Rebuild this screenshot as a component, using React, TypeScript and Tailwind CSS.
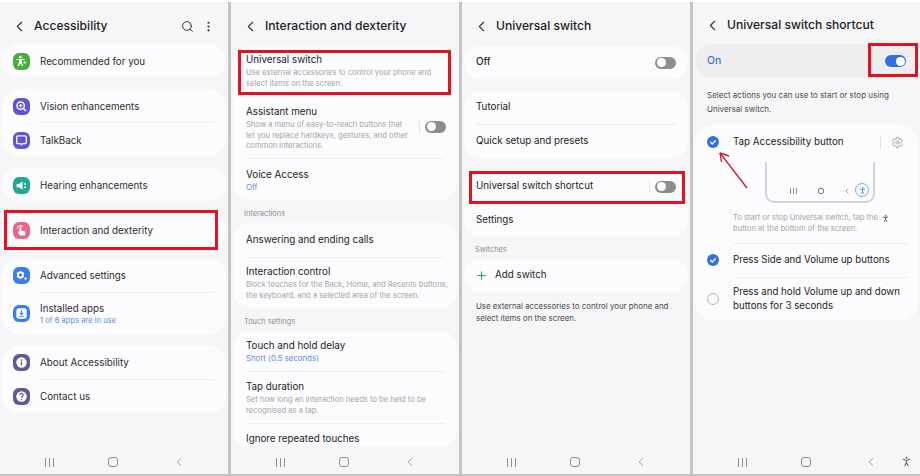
import type { ReactNode } from 'react'
import { ChevronLeft, MoreVertical, PersonStanding, Plus, Search, Settings } from 'lucide-react'

const font = 'font-["Inter","Liberation_Sans",sans-serif]'

function Card({ children, className = '' }: { children: ReactNode; className?: string }) {
  return <div className={`mx-[2px] rounded-[17px] bg-[#fcfcfe] ${className}`}>{children}</div>
}

function Divider({ left = 'ml-[37px]', right = 'mr-[12px]' }: { left?: string; right?: string }) {
  return <div className={`h-px bg-[#eeeef0] ${left} ${right}`} />
}

function Toggle({ on = false }: { on?: boolean }) {
  return (
    <div className={`flex h-[12px] w-[21px] items-center rounded-full px-[1.5px] ${on ? 'justify-end bg-[#2f6fe0]' : 'justify-start bg-[#8d8d8f]'}`}>
      <div className="h-[9px] w-[9px] rounded-full bg-white" />
    </div>
  )
}

function Header({ title, pad = 'pt-[7px]', children }: { title: string; pad?: string; children?: ReactNode }) {
  return (
    <div className={`flex h-[42px] shrink-0 items-center pl-[11px] pr-[13px] ${pad}`}>
      <ChevronLeft className="h-[17px] w-[17px] text-[#333]" strokeWidth={1.5} />
      <span className="ml-[6px] text-[12.1px] font-medium text-[#1c1c1e]">{title}</span>
      {children}
    </div>
  )
}

function NavBar() {
  return (
    <div className="relative flex h-[28px] shrink-0 items-center justify-between pl-[45px] pr-[42px] pt-[4px]">
      <div className="flex gap-[3px]">
        <div className="h-[9px] w-px bg-[#8f8f92]" />
        <div className="h-[9px] w-px bg-[#8f8f92]" />
        <div className="h-[9px] w-px bg-[#8f8f92]" />
      </div>
      <div className="h-[10px] w-[10px] rounded-[3px] border border-[#8f8f92]" />
      <ChevronLeft className="h-[14px] w-[14px] text-[#8f8f92]" strokeWidth={1.4} />
    </div>
  )
}

function MenuIcon({ color, children }: { color: string; children: ReactNode }) {
  return (
    <div className={`flex h-[17px] w-[17px] shrink-0 items-center justify-center rounded-[6px] text-white ${color}`}>
      <svg viewBox="0 0 12 12" className="h-[13px] w-[13px]" fill="currentColor">{children}</svg>
    </div>
  )
}

function MenuRow({ icon, title, sub, h = 'h-[33px]', nudge = '' }: { icon: ReactNode; title: string; sub?: string; h?: string; nudge?: string }) {
  return (
    <div className={`flex items-center pl-[11px] ${h} ${nudge}`}>
      {icon}
      <div className="ml-[10px]">
        <div className="text-[9.8px] leading-[13px] text-[#2c2c2e]">{title}</div>
        {sub && <div className="text-[7.6px] leading-[11px] text-[#5f8fdc]">{sub}</div>}
      </div>
    </div>
  )
}

function AccessibilityPanel() {
  return (
    <div className="flex h-full w-[228px] shrink-0 flex-col">
      <Header title="Accessibility">
        <Search className="ml-auto h-[13px] w-[13px] text-[#333]" strokeWidth={1.8} />
        <MoreVertical className="ml-[8px] h-[13px] w-[13px] text-[#333]" strokeWidth={2} />
      </Header>
      <div className="flex-1 overflow-hidden">
        <Card>
          <MenuRow
            nudge="pt-[2px]"
            icon={
              <MenuIcon color="bg-[#46ad3c]">
                <circle cx="5" cy="2" r="1.2" />
                <path d="M1 3.6h8v1.1H6.3v2l1.4 3.6H6.5L5 7.6l-1.5 2.7H2.300l1.400-3.600v-2H1z" />
                <path d="M9 6.200c.4-.5 1.300-.3 1.300.4 0 .6-.8 1.100-1.300 1.500-.5-.4-1.300-.9-1.300-1.500 0-.7.900-.9 1.300-.4z" />
              </MenuIcon>
            }
            title="Recommended for you"
          />
        </Card>
        <Card className="mt-[12px]">
          <MenuRow
            nudge="pt-[2px]"
            icon={
              <MenuIcon color="bg-[#5e54d8]">
                <circle cx="5.200" cy="5.200" r="3.400" fill="none" stroke="currentColor" strokeWidth="1.300" />
                <path d="M3.700 5.200h3M5.200 3.700v3M7.900 7.900l2.300 2.300" fill="none" stroke="currentColor" strokeWidth="1.200" />
              </MenuIcon>
            }
            title="Vision enhancements"
          />
          <Divider />
          <MenuRow
            nudge="pt-[2px]"
            icon={
              <MenuIcon color="bg-[#5e54d8]">
                <path d="M2.600 1.800h6.800a1 1 0 0 1 1 1v5a1 1 0 0 1-1 1H7l-1 1.200-1-1.200H2.600a1 1 0 0 1-1-1v-5a1 1 0 0 1 1-1z" fill="none" stroke="currentColor" strokeWidth="1.200" />
              </MenuIcon>
            }
            title="TalkBack"
          />
        </Card>
        <Card className="mt-[12px]">
          <MenuRow
            nudge="pt-[2px]"
            icon={
              <MenuIcon color="bg-[#1fa896]">
                <path d="M1.500 4.500h2L7 2.300v7.400L3.500 7.500h-2z" />
                <circle cx="9.300" cy="4.500" r=".9" />
                <circle cx="9.300" cy="7.500" r=".9" />
              </MenuIcon>
            }
            title="Hearing enhancements"
          />
        </Card>
        <Card className="mt-[12px]">
          <MenuRow
            icon={
              <MenuIcon color="bg-[#e8668c]">
                <path d="M2.300 4.200a2.600 2.600 0 0 1 4.700-1.500" fill="none" stroke="currentColor" strokeWidth="1" />
                <path d="M4.200 3.700a.8.8 0 0 1 1.600 0v2.200l3 .7c.6.2.9.600.8 1.200l-.4 2.700H4.800L2.700 7.800c-.3-.4.200-1 .7-.7l.8.500z" />
              </MenuIcon>
            }
            title="Interaction and dexterity"
            h="h-[34px]"
          />
        </Card>
        <Card className="mt-[12px]">
          <MenuRow
            icon={
              <MenuIcon color="bg-[#3b7cf0]">
                <circle cx="5" cy="5.500" r="2.300" fill="none" stroke="currentColor" strokeWidth="1.600" />
                <path d="M5 1.800v1.400M5 7.800v1.400M1.800 3.700l1.200.7M7 6.600l1.200.7M1.800 7.300L3 6.600M7 4.400l1.200-.7" stroke="currentColor" strokeWidth="1.500" />
                <path d="M9.800 7.400v3M8.300 8.900h3" stroke="currentColor" strokeWidth=".8" />
              </MenuIcon>
            }
            title="Advanced settings"
          />
          <Divider />
          <MenuRow
            icon={
              <MenuIcon color="bg-[#3b7cf0]">
                <rect x="1.200" y="1.200" width="9.600" height="9.600" rx="2.400" />
                <path d="M6 3v3.800M4.300 5.400L6 7l1.700-1.600M3.800 8.500h4.400" fill="none" stroke="#3b7cf0" strokeWidth="1" />
              </MenuIcon>
            }
            title="Installed apps"
            sub="1 of 6 apps are in use"
            h="h-[41px]"
          />
        </Card>
        <Card className="mt-[12px]">
          <MenuRow
            icon={
              <MenuIcon color="bg-[#5f5a96]">
                <circle cx="6" cy="6" r="4.800" />
                <circle cx="6" cy="3.700" r=".8" fill="#5f5a96" />
                <rect x="5.350" y="5.100" width="1.300" height="3.700" rx=".4" fill="#5f5a96" />
              </MenuIcon>
            }
            title="About Accessibility"
          />
          <Divider />
          <MenuRow
            icon={
              <MenuIcon color="bg-[#5f5a96]">
                <circle cx="6" cy="6" r="4.800" />
                <path d="M4.500 4.600a1.500 1.500 0 1 1 2.300 1.300c-.5.300-.8.600-.8 1.200" fill="none" stroke="#5f5a96" strokeWidth="1.100" />
                <circle cx="6" cy="8.700" r=".7" fill="#5f5a96" />
              </MenuIcon>
            }
            title="Contact us"
          />
        </Card>
      </div>
      <NavBar />
    </div>
  )
}

function TextRow({ title, desc, sub, pad = 'py-[7px]', children }: { title: string; desc?: string[]; sub?: string; pad?: string; children?: ReactNode }) {
  return (
    <div className={`flex items-center pl-[13px] pr-[13px] ${pad}`}>
      <div className="min-w-0 flex-1">
        <div className="whitespace-nowrap text-[9.8px] leading-[14px] text-[#222224]">{title}</div>
        {sub && <div className="text-[7.8px] leading-[11px] text-[#5f8fdc]">{sub}</div>}
        {desc && (
          <div className="mt-[1px]">
            {desc.map(line => (
              <div key={line} className="whitespace-nowrap text-[7.6px] leading-[10.6px] text-[#a3a3a6]">{line}</div>
            ))}
          </div>
        )}
      </div>
      {children}
    </div>
  )
}

function SectionLabel({ children }: { children: ReactNode }) {
  return <div className="pl-[13px] text-[7.4px] leading-[10px] text-[#8c8c8f]">{children}</div>
}

function DexterityPanel() {
  return (
    <div className="flex h-full w-[228px] shrink-0 flex-col">
      <Header title="Interaction and dexterity" />
      <div className="flex-1 overflow-hidden">
        <Card className="mt-[3px]">
          <TextRow title="Universal switch" desc={['Use external accessories to control your phone and', 'select items on the screen.']} pad="pt-[6px] pb-[16px]" />
          <TextRow title="Assistant menu" desc={['Show a menu of easy-to-reach buttons that', 'let you replace hardkeys, gestures, and other', 'common interactions.']} pad="pb-[6px]">
            <div className="-mr-[2px] mb-[4px] flex items-center gap-[5px]">
              <div className="h-[13px] w-px bg-[#e4e4e6]" />
              <Toggle />
            </div>
          </TextRow>
          <Divider left="ml-[13px]" />
          <TextRow title="Voice Access" sub="Off" pad="pt-[9px] pb-[7px]" />
        </Card>
        <div className="mt-[9px]"><SectionLabel>Interactions</SectionLabel></div>
        <Card className="mt-[4px]">
          <TextRow title="Answering and ending calls" pad="py-[10px]" />
          <Divider left="ml-[13px]" />
          <TextRow title="Interaction control" desc={['Block touches for the Back, Home, and Recents buttons,', 'the keyboard, and a selected area of the screen.']} pad="pt-[7px] pb-[7px]" />
        </Card>
        <div className="mt-[9px]"><SectionLabel>Touch settings</SectionLabel></div>
        <Card className="mt-[4px] overflow-hidden">
          <TextRow title="Touch and hold delay" sub="Short (0.5 seconds)" pad="pt-[8px] pb-[7px]" />
          <Divider left="ml-[13px]" />
          <TextRow title="Tap duration" desc={['Set how long an interaction needs to be held to be', 'recognised as a tap.']} pad="pt-[8px] pb-[7px]" />
          <Divider left="ml-[13px]" />
          <TextRow title="Ignore repeated touches" pad="pt-[8px] pb-[2px]" />
        </Card>
      </div>
      <NavBar />
    </div>
  )
}

function SimpleRow({ title, strong, children }: { title: string; strong?: boolean; children?: ReactNode }) {
  return (
    <div className="flex h-[33px] items-center pl-[12px] pr-[12px]">
      <span className={`text-[9.8px] text-[#222224] ${strong ? 'font-medium' : ''}`}>{title}</span>
      <div className="ml-auto flex items-center gap-[5px]">{children}</div>
    </div>
  )
}

function SwitchPanel() {
  return (
    <div className="flex h-full w-[228px] shrink-0 flex-col">
      <Header title="Universal switch" />
      <div className="flex-1 overflow-hidden">
        <Card className="mt-[2px]">
          <SimpleRow title="Off" strong><Toggle /></SimpleRow>
        </Card>
        <Card className="mt-[12px]">
          <SimpleRow title="Tutorial" />
          <Divider left="ml-[12px]" />
          <SimpleRow title="Quick setup and presets" />
        </Card>
        <Card className="mt-[12px]">
          <SimpleRow title="Universal switch shortcut">
            <div className="h-[13px] w-px bg-[#e4e4e6]" />
            <Toggle />
          </SimpleRow>
          <div className="h-px" />
          <SimpleRow title="Settings" />
        </Card>
        <div className="mt-[8px]"><SectionLabel>Switches</SectionLabel></div>
        <Card className="mt-[4px]">
          <div className="flex h-[33px] items-center pl-[11px]">
            <Plus className="h-[13px] w-[13px] text-[#1fa67e]" strokeWidth={2} />
            <span className="ml-[7px] text-[9.8px] text-[#222224]">Add switch</span>
          </div>
        </Card>
        <div className="mt-[8px] pl-[14px] text-[7.9px] leading-[12.4px] text-[#4a4a4c]">
          <div>Use external accessories to control your phone and</div>
          <div>select items on the screen.</div>
        </div>
      </div>
      <NavBar />
    </div>
  )
}

function Check() {
  return (
    <div className="flex h-[12px] w-[12px] shrink-0 items-center justify-center rounded-full bg-[#2f72e8]">
      <svg viewBox="0 0 12 12" className="h-[12px] w-[12px]" fill="none" stroke="white" strokeWidth="1.4">
        <path d="M3.4 6.1l1.9 1.9 3.4-3.5" />
      </svg>
    </div>
  )
}

function ShortcutPanel() {
  return (
    <div className="relative flex h-full flex-1 flex-col">
      <Header title="Universal switch shortcut" pad="pt-[5px]" />
      <div className="flex-1 overflow-hidden">
        <div className="mx-[2px] flex h-[34px] items-center justify-between rounded-[17px] bg-[#eeeef0] pl-[12px] pr-[12px]">
          <span className="text-[10.4px] font-medium text-[#3a73d8]">On</span>
          <Toggle on />
        </div>
        <div className="mt-[10px] pl-[14px] text-[8px] leading-[14px] text-[#4a4a4c]">
          <div>Select actions you can use to start or stop using</div>
          <div>Universal switch.</div>
        </div>
        <Card className="mt-[9px] pb-[7px]">
          <div className="flex h-[34px] items-center pl-[12px] pr-[14px]">
            <Check />
            <span className="ml-[14px] text-[9.8px] text-[#222224]">Tap Accessibility button</span>
            <div className="ml-auto h-[13px] w-px bg-[#e4e4e6]" />
            <Settings className="ml-[10px] h-[13px] w-[13px] text-[#8a8a8d]" strokeWidth={1.4} />
          </div>
          <div className="ml-[70px] mt-[3px] flex h-[41px] w-[110px] items-end justify-between rounded-b-[9px] border-x-2 border-b-2 border-[#cfd3da] pb-[4px] pl-[23px] pr-[4px]">
            <div className="mb-[3px] flex gap-[2px]">
              <div className="h-[6px] w-px bg-[#8f8f92]" />
              <div className="h-[6px] w-px bg-[#8f8f92]" />
              <div className="h-[6px] w-px bg-[#8f8f92]" />
            </div>
            <div className="mb-[3px] ml-[17px] h-[6px] w-[6px] rounded-[2px] border border-[#77777a]" />
            <ChevronLeft className="mb-[2px] ml-[15px] h-[8px] w-[8px] text-[#77777a]" strokeWidth={2} />
            <div className="flex h-[14px] w-[14px] items-center justify-center rounded-full border border-[#6aaef0] text-[#4a8ee0]">
              <PersonStanding className="h-[9px] w-[9px]" strokeWidth={2.5} />
            </div>
          </div>
          <div className="ml-[38px] mt-[10px] text-[7.6px] leading-[10.8px] text-[#a3a3a6]">
            <div className="flex items-center">
              To start or stop Universal switch, tap the
              <PersonStanding className="ml-[3px] h-[9px] w-[9px] text-[#5a5a5c]" strokeWidth={2.5} />
            </div>
            <div>button at the bottom of the screen.</div>
          </div>
          <div className="mt-[8px]"><Divider left="ml-[38px]" right="mr-[10px]" /></div>
          <div className="flex h-[33px] items-center pl-[12px]">
            <Check />
            <span className="ml-[14px] text-[9.7px] text-[#222224]">Press Side and Volume up buttons</span>
          </div>
          <Divider left="ml-[38px]" right="mr-[10px]" />
          <div className="flex items-center pl-[12px] pt-[7px]">
            <div className="h-[12px] w-[12px] shrink-0 rounded-full border border-[#b5b5b8]" />
            <div className="ml-[14px] text-[9.7px] leading-[14px] text-[#222224]">
              <div>Press and hold Volume up and down</div>
              <div>buttons for 3 seconds</div>
            </div>
          </div>
        </Card>
      </div>
      <div className="relative">
        <NavBar />
        <PersonStanding className="absolute right-[7px] top-[9px] h-[13px] w-[13px] text-[#6a6a6d]" strokeWidth={2} />
      </div>
      <svg className="absolute left-[24px] top-[148px] h-[40px] w-[36px]" viewBox="0 0 36 40" fill="none" stroke="#d0202e" strokeWidth="1.4">
        <path d="M30 38L3 3" />
        <path d="M3 3l1.5 9M3 3l9 3" />
      </svg>
    </div>
  )
}

function Gutter() {
  return <div className="h-full w-[3px] shrink-0 bg-[#c4c4c6]" />
}

function Highlight({ className }: { className: string }) {
  return <div className={`absolute border-[3px] border-[#e8101e] ${className}`} />
}

export default function App() {
  return (
    <div className={`relative h-[476px] w-[920px] overflow-hidden bg-white ${font}`}>
      <div className="h-[2px] bg-white" />
      <div className="flex h-[472px] bg-[#f6f6f8]">
        <AccessibilityPanel />
        <Gutter />
        <DexterityPanel />
        <Gutter />
        <SwitchPanel />
        <Gutter />
        <ShortcutPanel />
      </div>
      <div className="h-[2px] bg-[#c4c4c6]" />
      <Highlight className="left-[4px] top-[210px] h-[40px] w-[214px]" />
      <Highlight className="left-[238px] top-[50px] h-[45px] w-[213px]" />
      <Highlight className="left-[469px] top-[171px] h-[33px] w-[216px]" />
      <Highlight className="left-[868px] top-[43px] h-[34px] w-[50px]" />
    </div>
  )
}
